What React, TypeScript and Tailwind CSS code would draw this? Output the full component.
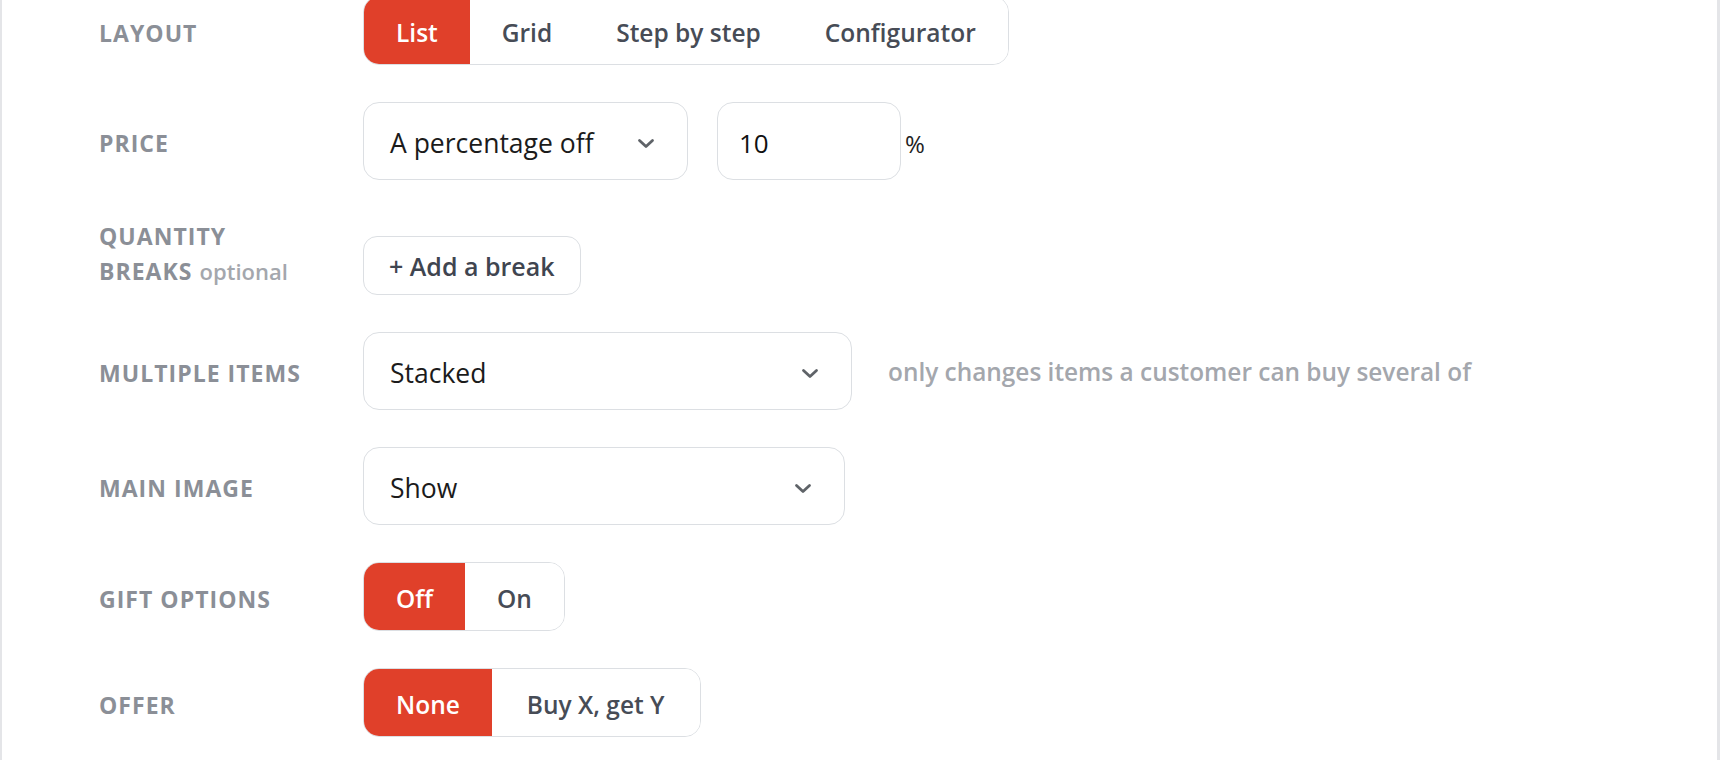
import React from "react";

const Chevron = () => (
  <svg width="18" height="11" viewBox="0 0 18 11" fill="none">
    <polyline points="2.5,2.5 9,8.5 15.5,2.5" stroke="#5f6368" strokeWidth="2.8" strokeLinecap="round" strokeLinejoin="round" />
  </svg>
);

const Label = ({ children, extra = "pt-[5px]" }: { children: React.ReactNode; extra?: string }) => (
  <div className={`w-[264px] shrink-0 text-[23px] font-bold tracking-[0.045em] text-[#8b8f97] leading-[35px] ${extra}`}>
    {children}
  </div>
);

const Segmented = ({ items, active, lastPad = "px-[32px]" }: { items: string[]; active: number; lastPad?: string }) => (
  <div className="flex h-[69px] rounded-[16px] border-[1.5px] border-[#dcdfe3] overflow-hidden">
    {items.map((it, i) => (
      <div
        key={it}
        className={
          i === active
            ? "flex items-center pt-[5px] px-[32px] bg-[#e0402a] text-white text-[24.5px] font-semibold"
            : i === items.length - 1
            ? `flex items-center pt-[5px] ${lastPad} bg-white text-[#474c56] text-[24.5px] font-semibold`
            : "flex items-center pt-[5px] px-[32px] bg-white text-[#474c56] text-[24.5px] font-semibold"
        }
      >
        {it}
      </div>
    ))}
  </div>
);

const Select = ({ value, width }: { value: string; width: string }) => (
  <div className={`${width} h-[78px] flex items-center justify-between pt-[5px] pl-[26px] pr-[32px] rounded-[16px] border-[1.5px] border-[#dcdfe3] bg-white text-[26.5px] text-[#1b1b1b]`}>
    <span>{value}</span>
    <Chevron />
  </div>
);

export default function App() {
  return (
    <div className="w-[1720px] h-[760px] overflow-hidden bg-white border-l-2 border-r-[3px] border-[#e4e5e8] font-['Open_Sans','Noto_Sans',sans-serif]">
      <div className="pl-[97px] -mt-[4px] flex flex-col gap-[37px]">
        <div className="flex items-center h-[69px]">
          <Label>LAYOUT</Label>
          <Segmented items={["List", "Grid", "Step by step", "Configurator"]} active={0} />
        </div>

        <div className="flex items-center">
          <Label>PRICE</Label>
          <Select value="A percentage off" width="w-[325px]" />
          <div className="ml-[29px] w-[184px] h-[78px] flex items-center pt-[5px] pl-[21px] rounded-[16px] border-[1.5px] border-[#dcdfe3] text-[26px] font-medium text-[#111]">
            10
          </div>
          <span className="ml-[4px] pt-[5px] text-[24px] text-[#222]">%</span>
        </div>

        <div className="flex items-start">
          <div className="pt-[2px]">
            <Label extra="">
              QUANTITY
              <br />
              BREAKS <span className="normal-case tracking-normal font-semibold text-[22px] text-[#a4a7ad]">optional</span>
            </Label>
          </div>
          <div className="mt-[19px] h-[59px] flex items-center pt-[2px] px-[25px] rounded-[14px] border-[1.5px] border-[#dcdfe3] text-[25px] font-semibold text-[#3f4550]">
            + Add a break
          </div>
        </div>

        <div className="flex items-center">
          <Label>MULTIPLE ITEMS</Label>
          <Select value="Stacked" width="w-[489px]" />
          <span className="ml-[36px] pt-[3px] text-[24.4px] font-semibold text-[#a4a7ad]">
            only changes items a customer can buy several of
          </span>
        </div>

        <div className="flex items-center">
          <Label>MAIN IMAGE</Label>
          <Select value="Show" width="w-[482px]" />
        </div>

        <div className="flex items-center">
          <Label>GIFT OPTIONS</Label>
          <Segmented items={["Off", "On"]} active={0} />
        </div>

        <div className="flex items-center">
          <Label>OFFER</Label>
          <Segmented items={["None", "Buy X, get Y"]} active={0} lastPad="px-[35px]" />
        </div>
      </div>
    </div>
  );
}
